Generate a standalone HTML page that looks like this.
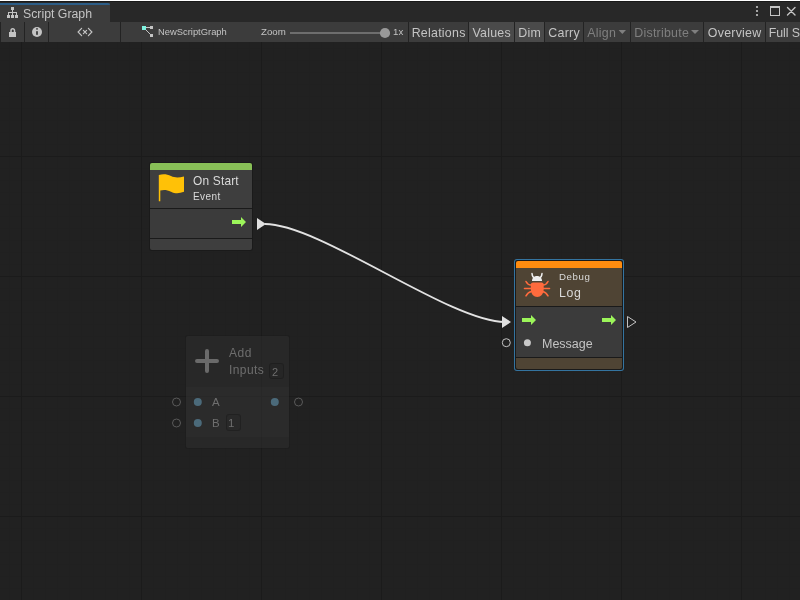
<!DOCTYPE html>
<html><head><meta charset="utf-8">
<style>
*{margin:0;padding:0;box-sizing:border-box}
html,body{width:800px;height:600px;overflow:hidden;background:#202020;font-family:"Liberation Sans",sans-serif;position:relative}
.t,.btn,#tabtxt{will-change:transform}
.a{position:absolute}
#top0{left:0;top:0;width:800px;height:1px;background:#fff}
#top1{left:0;top:1px;width:800px;height:1px;background:#191919}
#tabbar{left:0;top:2px;width:800px;height:20px;background:#282828}
#tab{left:0;top:3px;width:110px;height:19px;background:#3c3c3c}
#tabline{left:0;top:3px;width:110px;height:2px;background:#2c5d87;border-radius:0 2px 0 0}
#tabtxt{left:23px;top:6px;font-size:12.3px;color:#c4c4c4;line-height:16px;white-space:nowrap}
#toolbar{left:0;top:22px;width:800px;height:20px;background:#3c3c3c}
.sep{top:22px;width:1px;height:20px;background:#232323}
.btn{top:22px;height:20px;font-size:12.4px;line-height:22px;letter-spacing:0.25px;text-indent:0.25px;color:#c4c4c4;text-align:center;white-space:nowrap}
.on{background:#4a4a4a}
.dis{color:#7f7f7f}
#grid{left:0;top:42px;width:800px;height:558px;overflow:hidden;
background-color:#212121;
background-image:linear-gradient(to right,#1b1b1b 1px,transparent 1px),linear-gradient(to bottom,#1b1b1b 1px,transparent 1px),linear-gradient(to right,#202020 1px,transparent 1px),linear-gradient(to bottom,#202020 1px,transparent 1px);
background-size:120px 120px,120px 120px,12px 12px,12px 12px;
background-position:21px 0,0 114px,9px 0,0 6px}
.node{position:absolute}
.t{position:absolute;white-space:nowrap;line-height:1}
</style></head><body>
<div id="top0" class="a"></div>
<div id="top1" class="a"></div>
<div id="tabbar" class="a"></div>
<div id="tab" class="a"></div>
<div id="tabline" class="a"></div>
<svg class="a" style="left:0;top:0" width="800" height="22">
  <g fill="#c4c4c4">
    <rect x="11" y="7" width="3" height="3"/>
    <rect x="12" y="10" width="1" height="2"/>
    <rect x="8" y="12" width="9" height="1"/>
    <rect x="8" y="12" width="1" height="3"/>
    <rect x="12" y="12" width="1" height="3"/>
    <rect x="16" y="12" width="1" height="3"/>
    <rect x="7" y="15" width="3" height="3"/>
    <rect x="11" y="15" width="3" height="3"/>
    <rect x="15" y="15" width="3" height="3"/>
  </g>
  <!-- menu dots -->
  <g fill="#c4c4c4"><circle cx="757" cy="7" r="1.1"/><circle cx="757" cy="11" r="1.1"/><circle cx="757" cy="15" r="1.1"/></g>
  <!-- maximize -->
  <rect x="770.5" y="6.5" width="9" height="9" fill="none" stroke="#c4c4c4" stroke-width="1"/>
  <rect x="770" y="6" width="10" height="2" fill="#c4c4c4"/>
  <!-- close -->
  <path d="M787.5 7.5L795 15M795 7.5L787.5 15" stroke="#c4c4c4" stroke-width="1.4" stroke-linecap="round"/>
</svg>
<div id="tabtxt" class="a">Script Graph</div>

<div id="toolbar" class="a"></div>
<div class="a sep" style="left:0"></div>
<div class="a sep" style="left:24px"></div>
<div class="a sep" style="left:48px"></div>
<div class="a sep" style="left:120px"></div>
<div class="a sep" style="left:408px"></div>
<div class="a btn" style="left:409px;width:59px">Relations</div>
<div class="a sep" style="left:468px"></div>
<div class="a btn on" style="left:469px;width:45px">Values</div>
<div class="a sep" style="left:514px"></div>
<div class="a btn on" style="left:515px;width:29px">Dim</div>
<div class="a sep" style="left:544px"></div>
<div class="a btn" style="left:545px;width:38px">Carry</div>
<div class="a sep" style="left:583px"></div>
<div class="a btn dis" style="left:584px;width:46px;text-align:left;padding-left:3px">Align</div>
<div class="a sep" style="left:630px"></div>
<div class="a btn dis" style="left:631px;width:72px;text-align:left;padding-left:3px">Distribute</div>
<div class="a sep" style="left:703px"></div>
<div class="a btn" style="left:704px;width:61px">Overview</div>
<div class="a sep" style="left:765px"></div>
<div class="a btn" style="left:766px;width:60px;text-align:left;padding-left:2.6px;letter-spacing:-0.1px">Full Screen</div>
<div class="a t" style="left:158px;top:27px;font-size:9.4px;color:#c4c4c4">NewScriptGraph</div>
<div class="a t" style="left:260.8px;top:27px;font-size:9.7px;color:#c4c4c4">Zoom</div>
<div class="a t" style="left:393.1px;top:27px;font-size:9.7px;color:#c4c4c4">1x</div>
<svg class="a" style="left:0;top:22px" width="800" height="20">
  <!-- lock -->
  <path d="M11 10.5V8.5a1.75 1.75 0 0 1 3.5 0V10.5" fill="none" stroke="#c4c4c4" stroke-width="1.5"/>
  <rect x="9" y="10" width="7" height="5" fill="#c4c4c4"/>
  <!-- info -->
  <circle cx="37" cy="10" r="5" fill="#c4c4c4"/>
  <rect x="36.1" y="6.2" width="1.8" height="1.4" fill="#3c3c3c"/>
  <rect x="36.1" y="9.2" width="1.8" height="3.6" fill="#3c3c3c"/>
  <!-- <x> -->
  <path d="M81.6 6.3L78.1 10L81.6 13.7M88.4 6.3L91.9 10L88.4 13.7M83.4 8.4L86.6 11.7M86.6 8.4L83.4 11.7" fill="none" stroke="#c4c4c4" stroke-width="1.2" stroke-linecap="round"/>
  <!-- graph icon -->
  <path d="M146 5.5H150.5M145.5 7.5L151 13" stroke="#c4c4c4" stroke-width="1"/>
  <rect x="142" y="4" width="4" height="4" fill="#7ff3e0"/>
  <rect x="150" y="4" width="3" height="3" fill="#c4c4c4"/>
  <rect x="150" y="12" width="3" height="3" fill="#c4c4c4"/>
  <!-- slider -->
  <rect x="290" y="10" width="95" height="2" fill="#6e6e6e"/>
  <circle cx="385" cy="11" r="5.1" fill="#999"/>
  <!-- dropdown arrows -->
  <path d="M618.6 8H626L622.3 12Z" fill="#7f7f7f"/>
  <path d="M691 8H699L695 12Z" fill="#7f7f7f"/>
</svg>
<div id="grid" class="a"></div>
<!-- On Start node -->
<div class="a" style="left:149px;top:162px;width:104px;height:89px;background:#1a1a1a;border-radius:3px"></div>
<div class="a" style="left:150px;top:163px;width:102px;height:7px;background:#88c057;border-radius:2px 2px 0 0"></div>
<div class="a" style="left:150px;top:170px;width:102px;height:38px;background:#3e3e3e"></div>
<div class="a" style="left:150px;top:209px;width:102px;height:29px;background:#3b3b3b"></div>
<div class="a" style="left:150px;top:239px;width:102px;height:11px;background:#3e3e3e;border-radius:0 0 2px 2px"></div>
<div class="a t" style="left:193px;top:175.5px;font-size:11.9px;letter-spacing:0.2px;color:#dadada">On Start</div>
<div class="a t" style="left:192.5px;top:191.5px;font-size:10px;letter-spacing:0.45px;color:#dadada">Event</div>
<!-- Debug Log node -->
<div class="a" style="left:514px;top:259px;width:110px;height:112px;background:#3474a0;border-radius:3px"></div>
<div class="a" style="left:515px;top:260px;width:108px;height:110px;background:#1a1a1a;border-radius:2px"></div>
<div class="a" style="left:516px;top:261px;width:106px;height:7px;background:#ff8c0f;border-radius:2px 2px 0 0"></div>
<div class="a" style="left:516px;top:268px;width:106px;height:38px;background:#4f4434"></div>
<div class="a" style="left:516px;top:307px;width:106px;height:50px;background:#3b3b3b"></div>
<div class="a" style="left:516px;top:358px;width:106px;height:11px;background:#4f4434;border-radius:0 0 2px 2px"></div>
<div class="a t" style="left:558.8px;top:272.1px;font-size:9.7px;letter-spacing:0.6px;color:#dadada">Debug</div>
<div class="a t" style="left:558.8px;top:286.8px;font-size:12.3px;letter-spacing:0.65px;color:#dadada">Log</div>
<div class="a t" style="left:542px;top:338px;font-size:12.5px;color:#c4c4c4">Message</div>
<!-- Add node (dim) -->
<div class="a" style="left:185px;top:335px;width:105px;height:114px;background:rgba(10,10,10,.1);border-radius:3px"></div>
<div class="a" style="left:186px;top:336px;width:103px;height:51px;background:rgba(75,75,75,.24);border-radius:2px 2px 0 0"></div>
<div class="a" style="left:186px;top:387px;width:103px;height:50px;background:rgba(80,80,80,.27)"></div>
<div class="a" style="left:186px;top:437px;width:103px;height:11px;background:rgba(75,75,75,.24);border-radius:0 0 2px 2px"></div>
<div class="a t" style="left:229px;top:347px;font-size:12px;letter-spacing:0.5px;color:#6e6e6e">Add</div>
<div class="a t" style="left:229px;top:364px;font-size:12px;letter-spacing:0.4px;color:#6e6e6e">Inputs</div>
<div class="a" style="left:269px;top:362.5px;width:14.5px;height:16.5px;border:1px solid rgba(25,25,25,.45);border-radius:3px;background:rgba(30,30,30,.1)"></div>
<div class="a t" style="left:272px;top:367px;font-size:11px;color:#6e6e6e">2</div>
<div class="a t" style="left:212px;top:397px;font-size:11.5px;color:#6e6e6e">A</div>
<div class="a t" style="left:212px;top:418px;font-size:11.5px;color:#6e6e6e">B</div>
<div class="a" style="left:225.5px;top:414px;width:15px;height:17px;border:1px solid rgba(25,25,25,.45);border-radius:3px;background:rgba(30,30,30,.1)"></div>
<div class="a t" style="left:227.5px;top:418px;font-size:11.5px;color:#6e6e6e">1</div>
<svg class="a" style="left:0;top:0" width="800" height="600">
  <!-- flag -->
  <path d="M158.8 175 C163 173.5 167 174 171 176 C175 178 179 177.7 184 176.5 L184 191.8 C179 193.7 175 193.7 171 191.7 C167 189.7 163.5 189.5 160.3 190.5 L160.3 201.2 L158.8 201.2 Z" fill="#ffc107"/>
  <!-- On Start output arrow -->
  <path d="M232 220H241V217L246 222L241 227V224H232Z" fill="#9cf55a"/>
  <!-- edge -->
  <path d="M265 224 C320 224 450 322 505 322" fill="none" stroke="#e2e2e2" stroke-width="1.8"/>
  <path d="M257 218L266 224L257 230Z" fill="#e0e0e0"/>
  <path d="M502 316L511 322L502 328Z" fill="#e0e0e0"/>
  <!-- bug -->
  <g fill="none" stroke="#ff6b3d" stroke-width="1.6" stroke-linecap="round">
    <path d="M531 285 C529 285 527 283.5 526 281.5"/>
    <path d="M543 285 C545 285 547 283.5 548 281.5"/>
    <path d="M524.5 288.5H531M543 288.5H549.5"/>
    <path d="M531.5 291.5 C529 292 527 294 526 295.8"/>
    <path d="M542.5 291.5 C545 292 547 294 548 295.8"/>
  </g>
  <path d="M533 282.4 H541.6 Q543.7 282.4 543.7 284.5 V289 C543.7 294 540.7 297 537.25 297 C533.8 297 530.8 294 530.8 289 V284.5 Q530.8 282.4 533 282.4 Z" fill="#ff6b3d"/>
  <path d="M532 281 C532 277.5 534.5 276 537 276 C539.5 276 542 277.5 542 281 Z" fill="#eeeeee"/>
  <path d="M532 273.5 C532.2 276 533 277.5 534.5 278M542 273.5 C541.8 276 541 277.5 539.5 278" fill="none" stroke="#eeeeee" stroke-width="1.5" stroke-linecap="round"/>
  <!-- Debug arrows -->
  <path d="M522 318H531V315L536 320L531 325V322H522Z" fill="#9cf55a"/>
  <path d="M602 318H611V315L616 320L611 325V322H602Z" fill="#9cf55a"/>
  <path d="M627.5 316.5L636 322L627.5 327.5Z" fill="none" stroke="#c4c4c4" stroke-width="1"/>
  <circle cx="506.3" cy="342.7" r="4" fill="none" stroke="#c4c4c4" stroke-width="1"/>
  <circle cx="527.4" cy="342.7" r="3.5" fill="#c8c8c8"/>
  <!-- Add node icons -->
  <path d="M197 361H217M207 351V371" stroke="#6a6a6a" stroke-width="4" stroke-linecap="round"/>
  <circle cx="176.5" cy="402" r="4" fill="none" stroke="#5a5a5a" stroke-width="1"/>
  <circle cx="176.5" cy="423" r="4" fill="none" stroke="#5a5a5a" stroke-width="1"/>
  <circle cx="298.5" cy="402" r="4" fill="none" stroke="#5a5a5a" stroke-width="1"/>
  <circle cx="197.8" cy="402" r="4" fill="#4b6a7a"/>
  <circle cx="197.8" cy="423" r="4" fill="#4b6a7a"/>
  <circle cx="274.8" cy="402" r="4" fill="#4b6a7a"/>
</svg>
</body></html>
